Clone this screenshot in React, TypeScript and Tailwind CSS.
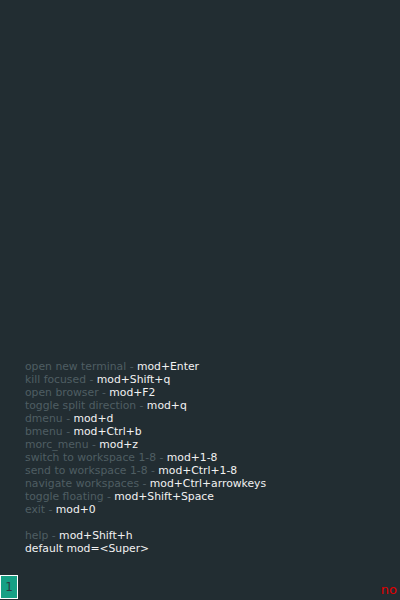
const lines: [string, string][] = [
  ['open new terminal', 'mod+Enter'],
  ['kill focused', 'mod+Shift+q'],
  ['open browser', 'mod+F2'],
  ['toggle split direction', 'mod+q'],
  ['dmenu', 'mod+d'],
  ['bmenu', 'mod+Ctrl+b'],
  ['morc_menu', 'mod+z'],
  ['switch to workspace 1-8', 'mod+1-8'],
  ['send to workspace 1-8', 'mod+Ctrl+1-8'],
  ['navigate workspaces', 'mod+Ctrl+arrowkeys'],
  ['toggle floating', 'mod+Shift+Space'],
  ['exit', 'mod+0'],
];

export default function App() {
  return (
    <div className="w-[400px] h-[600px] bg-[#222d32] flex flex-col font-['DejaVu_Sans',sans-serif] text-[10.8px] leading-[13px] overflow-hidden">
      <div className="flex-1 flex flex-col justify-end pl-[25px] pb-[20px]">
        {lines.map(([label, keys]) => (
          <div key={label} className="whitespace-pre">
            <span className="text-[#4f5e63]">{label} - </span>
            <span className="text-[#f2f2f2]">{keys}</span>
          </div>
        ))}
        <div className="h-[13px]" />
        <div className="whitespace-pre">
          <span className="text-[#4f5e63]">help - </span>
          <span className="text-[#f2f2f2]">mod+Shift+h</span>
        </div>
        <div className="text-[#f2f2f2] whitespace-pre">default mod=&lt;Super&gt;</div>
      </div>
      <div className="h-[25px] flex items-end justify-between">
        <div className="w-[18px] h-[24px] mb-[1px] bg-[#16a085] border border-white flex items-center justify-center text-[#2b3a3f] text-[12px]">
          1
        </div>
        <div className="text-[#e00000] text-[13px] pr-[3px] pb-[4px]">no</div>
      </div>
    </div>
  );
}
